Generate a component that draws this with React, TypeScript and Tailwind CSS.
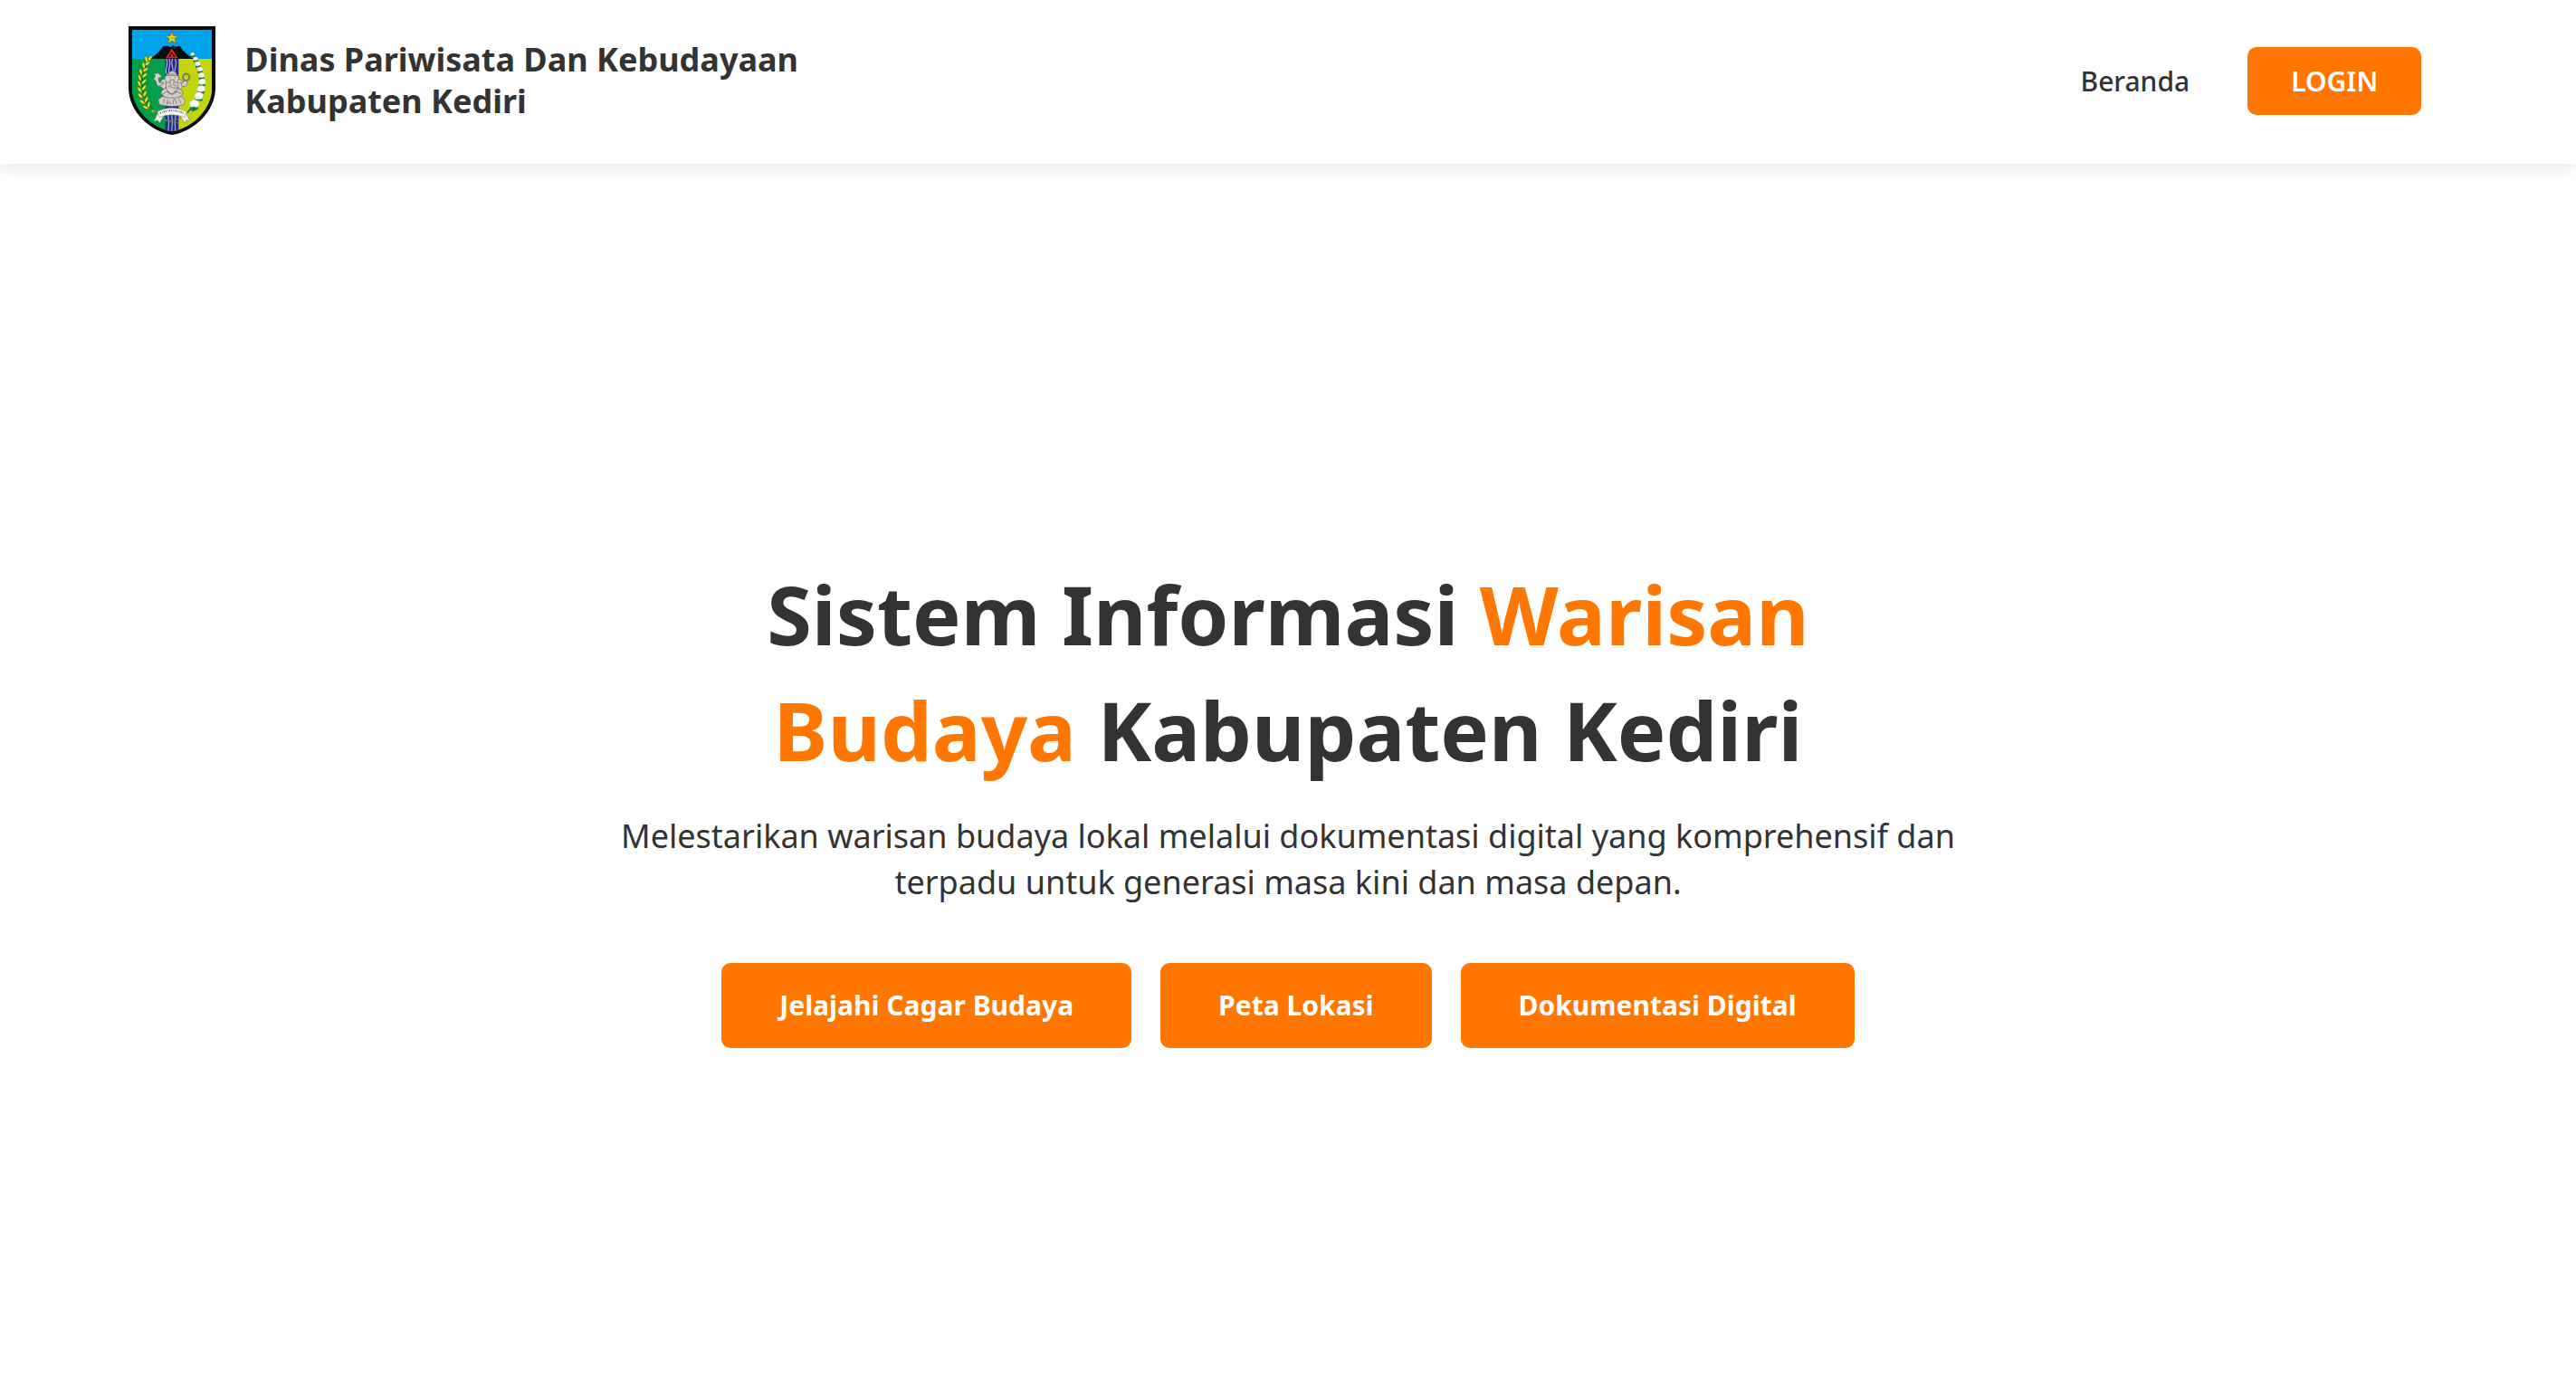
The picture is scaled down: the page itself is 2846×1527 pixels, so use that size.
const LEAVES: [number, number, number][] = [
  [110, 148, 35], [98, 152, -15], [101, 166, 50], [89, 172, -10], [95, 186, 55], [80, 193, -15],
  [92, 205, 50], [76, 213, -20], [90, 226, 45], [75, 233, -28], [90, 246, 40], [76, 253, -35],
  [93, 266, 30], [78, 273, -42], [98, 285, 20], [85, 293, -50], [106, 302, 10], [96, 311, -60],
];

const COTTON: [number, number, number][] = [
  [251, 135, 6], [261, 150, 7], [269, 167, 8], [276, 185, 8],
  [281, 205, 9], [283, 227, 10], [280, 250, 11], [272, 274, 12], [257, 300, 13],
];

function Crest() {
  return (
    <svg viewBox="39 42 288 360" className="h-[120px] w-24 shrink-0" aria-hidden="true">
      <defs>
        <clipPath id="shield">
          <path d="M50 53H316V245C316 312 255 379 183 391C111 379 50 312 50 245Z" />
        </clipPath>
      </defs>
      <path d="M39 42H327V245C327 325 256 390 183 402C110 390 39 325 39 245Z" fill="#080c0d" />
      <g clipPath="url(#shield)">
        <path d="M50 53H316V150H50Z" fill="#00a2ec" />
        <path d="M50 150H183V395H50Z" fill="#00a049" />
        <path d="M183 150H316V395H183Z" fill="#c3d60b" />
        <path d="M161 148H205V395H161Z" fill="#262a91" />
        <g fill="none" stroke="#e4e6f4" strokeWidth="2.5">
          <path d="M165 150q5 14 0 28t2 28M174 150q5 14 0 28t2 28M184 150q-4 14 1 28t-1 28M194 150q5 14 0 28t2 28" />
          <path d="M170 334q5 30 0 60M182 330q4 30 0 64M195 334q-5 30 0 60" />
        </g>
        <path d="M110 150C130 138 146 121 154 108L168 107L177 111L187 106L198 110L209 107C218 123 235 138 256 150Z" fill="#080c0d" />
      </g>
      <path d="M182 116L203 148H162Z" fill="#e5252a" />
      <path d="M182 126L194 144H171Z" fill="#19070a" />
      <path d="M182 132L189 143H176Z" fill="#e5252a" />
      <path d="M183 58L188 73L205 73L192 83L198 99L183 90L169 99L174 83L161 73L178 73Z" fill="#f4e21c" stroke="#5d5a20" strokeWidth="2" />
      <path d="M183 67V81L192 90M183 81L173 91M183 81L170 76M183 81L196 76" fill="none" stroke="#8d851d" strokeWidth="1.5" />

      <path d="M116 140C78 188 66 266 124 322" fill="none" stroke="#14502b" strokeWidth="3" />
      {LEAVES.map(([x, y, angle]) => (
        <path
          key={`${x}-${y}`}
          d="M0 -13C6 -5 6 5 0 12C-6 5 -6 -5 0 -13Z"
          transform={`translate(${x} ${y}) rotate(${angle})`}
          fill="#f8e51b"
          stroke="#3d5a22"
          strokeWidth="1.5"
        />
      ))}
      <path d="M118 318l11 3-6 8-9-4Z" fill="#c8981d" />

      <path d="M251 135C286 170 296 250 254 306L234 328" fill="none" stroke="#178244" strokeWidth="6" />
      {COTTON.map(([x, y, r]) => (
        <g key={`${x}-${y}`} transform={`translate(${x} ${y})`}>
          <path d={`M${-r - 1} ${r - 4}H${r + 1}L${r - 2} ${r + 5}L0 ${r + 2}L${-r + 1} ${r + 6}Z`} fill="#12793c" />
          <circle r={r - 1} cx={-r / 3} fill="#f6f8f5" stroke="#839582" strokeWidth="1" />
          <circle r={r - 1} cx={r / 3} cy="-1" fill="#f6f8f5" stroke="#839582" strokeWidth="1" />
          <circle r={r - 3} cy={-r / 3} fill="#fbfcfa" />
        </g>
      ))}
      <path d="M244 312l14-4 8 11-16 6Z" fill="#12793c" />

      <g stroke="#6a625f" strokeWidth="2" fill="#d3cdc7" strokeLinejoin="round">
        <path d="M137 286L150 275H214L227 288L222 303Q183 312 142 302Z" />
        <path d="M147 265Q149 248 167 247L183 254L202 247Q218 250 220 267Q207 282 183 279Q158 282 147 265Z" />
        <path d="M163 216Q139 217 143 240L157 251L168 237Z" />
        <path d="M201 216Q226 220 223 239L210 252L198 238Z" />
        <path d="M146 239Q132 246 130 224L122 217L128 207L123 199L139 198L150 209L138 214L141 228L154 233Z" />
        <path d="M216 241Q235 246 234 226L225 221L220 229L213 233Z" />
        <path d="M164 222Q158 264 183 268Q209 264 201 222Z" />
        <path d="M161 207Q156 222 169 230L183 223L199 230Q209 220 204 206L192 202H174Z" />
        <path d="M168 205L172 195L183 190L195 195L200 206Z" />
        <path d="M177 220Q174 243 188 247Q198 247 195 238L188 237L190 219Z" />
      </g>
      <circle cx="230" cy="211" r="11" fill="none" stroke="#57504d" strokeWidth="5" />
      <circle cx="230" cy="211" r="11" fill="none" stroke="#bcb4ae" strokeWidth="1.5" />
      <g fill="none" stroke="#655d59" strokeWidth="2">
        <path d="M151 267l15-9 15 9 17-9 17 8M158 282l-3 15M169 284l-2 16q7-15 12 0M187 300l2-16q8-1 8 15M205 282l8 16M174 211h4M190 211h4M171 201h23M148 225l11 7M207 231l10-5M170 240l8 4M194 250l7-6M168 256l7 6M190 259l8-2" />
      </g>

      <path d="M124 324Q158 362 205 363M238 324Q210 358 160 356" fill="none" stroke="#75802b" strokeWidth="3" />
      <path d="M136 329L123 358L136 353L142 363L155 341ZM229 329L244 356L231 353L225 363L211 341Z" fill="#f1f1ed" stroke="#69756a" strokeWidth="1.5" />
      <path d="M134 325Q183 300 232 325L224 344Q183 327 142 344Z" fill="#f5f5f2" stroke="#747a73" strokeWidth="1.5" />
      <path d="M144 330Q183 313 223 330" fill="none" stroke="#6b706d" strokeWidth="6" strokeDasharray="3 4 2 3 4 3" />
    </svg>
  );
}

const ACTIONS = ["Jelajahi Cagar Budaya", "Peta Lokasi", "Dokumentasi Digital"];

export default function App() {
  return (
    <div className="flex min-h-screen flex-col bg-white font-['Segoe_UI','Noto_Sans','Open_Sans',sans-serif] text-[#333333]">
      <header className="relative flex items-center justify-between bg-white pt-[29px] pr-[6%] pb-8 pl-[5%] shadow-[0_4px_20px_rgba(0,0,0,0.1)]">
        <a href="#" className="flex items-center gap-8">
          <Crest />
          <span className="text-[36px] leading-[46px] font-bold">
            Dinas Pariwisata Dan Kebudayaan
            <br />
            Kabupaten Kediri
          </span>
        </a>
        <nav className="flex items-center gap-16 text-[30px] leading-[43px]">
          <a href="#" className="font-medium">Beranda</a>
          <button type="button" className="rounded-[10px] bg-[#ff7700] px-12 py-4 font-semibold text-white">LOGIN</button>
        </nav>
      </header>
      <main className="flex flex-1 flex-col items-center justify-center px-[5%] pt-[64px] text-center">
        <h1 className="max-w-[1600px] text-[90px] leading-[128px] font-bold">
          Sistem Informasi <span className="text-[#ff7700]">Warisan<br />Budaya</span> Kabupaten Kediri
        </h1>
        <p className="mt-7 max-w-[1600px] text-[36px] leading-[51px]">
          Melestarikan warisan budaya lokal melalui dokumentasi digital yang komprehensif dan
          <br />
          terpadu untuk generasi masa kini dan masa depan.
        </p>
        <div className="mt-16 flex flex-wrap justify-center gap-8">
          {ACTIONS.map((label) => (
            <button key={label} type="button" className="rounded-[10px] bg-[#ff7700] px-16 py-6 text-[30px] leading-[46px] font-bold text-white">
              {label}
            </button>
          ))}
        </div>
      </main>
    </div>
  );
}
